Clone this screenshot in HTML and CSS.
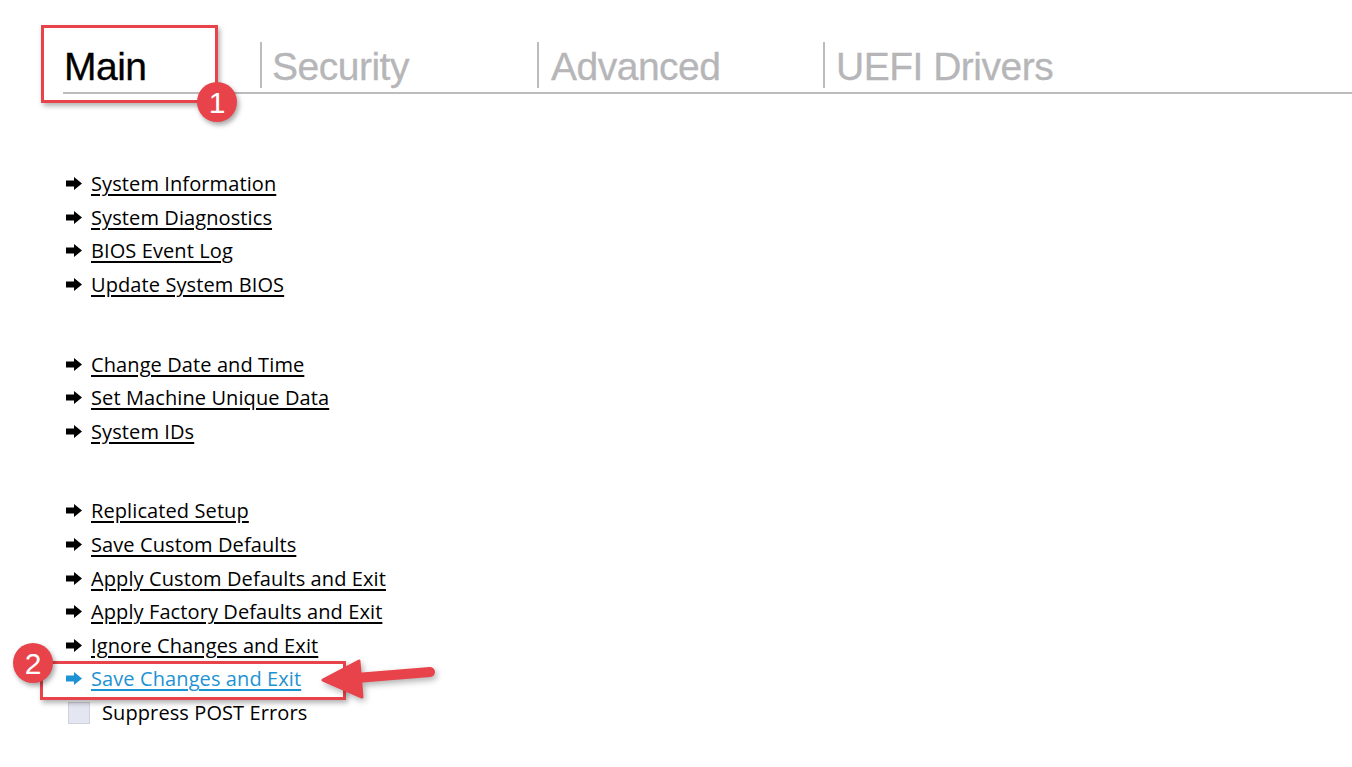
FILE: index.html
```html
<!DOCTYPE html>
<html>
<head>
<meta charset="utf-8">
<link rel="stylesheet" href="styles.css">
</head>
<body>
<div class="page">
  <nav class="tabs">
    <div class="tab tab-main active">Main</div>
    <div class="tab tab-security">Security</div>
    <div class="tab tab-advanced">Advanced</div>
    <div class="tab tab-uefi">UEFI Drivers</div>
  </nav>

  <div class="menu">
    <ul class="group">
      <li class="item"><svg class="arr" viewBox="0 0 16 13"><path d="M0 3.5h8V0l8 6.5-8 6.5V9.5H0z"/></svg><a>System Information</a></li>
      <li class="item"><svg class="arr" viewBox="0 0 16 13"><path d="M0 3.5h8V0l8 6.5-8 6.5V9.5H0z"/></svg><a>System Diagnostics</a></li>
      <li class="item"><svg class="arr" viewBox="0 0 16 13"><path d="M0 3.5h8V0l8 6.5-8 6.5V9.5H0z"/></svg><a>BIOS Event Log</a></li>
      <li class="item"><svg class="arr" viewBox="0 0 16 13"><path d="M0 3.5h8V0l8 6.5-8 6.5V9.5H0z"/></svg><a>Update System BIOS</a></li>
    </ul>
    <ul class="group">
      <li class="item"><svg class="arr" viewBox="0 0 16 13"><path d="M0 3.5h8V0l8 6.5-8 6.5V9.5H0z"/></svg><a>Change Date and Time</a></li>
      <li class="item"><svg class="arr" viewBox="0 0 16 13"><path d="M0 3.5h8V0l8 6.5-8 6.5V9.5H0z"/></svg><a>Set Machine Unique Data</a></li>
      <li class="item"><svg class="arr" viewBox="0 0 16 13"><path d="M0 3.5h8V0l8 6.5-8 6.5V9.5H0z"/></svg><a>System IDs</a></li>
    </ul>
    <ul class="group">
      <li class="item"><svg class="arr" viewBox="0 0 16 13"><path d="M0 3.5h8V0l8 6.5-8 6.5V9.5H0z"/></svg><a>Replicated Setup</a></li>
      <li class="item"><svg class="arr" viewBox="0 0 16 13"><path d="M0 3.5h8V0l8 6.5-8 6.5V9.5H0z"/></svg><a>Save Custom Defaults</a></li>
      <li class="item"><svg class="arr" viewBox="0 0 16 13"><path d="M0 3.5h8V0l8 6.5-8 6.5V9.5H0z"/></svg><a>Apply Custom Defaults and Exit</a></li>
      <li class="item"><svg class="arr" viewBox="0 0 16 13"><path d="M0 3.5h8V0l8 6.5-8 6.5V9.5H0z"/></svg><a>Apply Factory Defaults and Exit</a></li>
      <li class="item"><svg class="arr" viewBox="0 0 16 13"><path d="M0 3.5h8V0l8 6.5-8 6.5V9.5H0z"/></svg><a>Ignore Changes and Exit</a></li>
      <li class="item selected"><svg class="arr" viewBox="0 0 16 13"><path d="M0 3.5h8V0l8 6.5-8 6.5V9.5H0z"/></svg><a>Save Changes and Exit</a></li>
      <li class="item check"><span class="box"></span><span class="label">Suppress POST Errors</span></li>
    </ul>
  </div>

  <div class="callout callout-1"></div>
  <div class="badge badge-1">1</div>
  <div class="callout callout-2"></div>
  <div class="badge badge-2">2</div>
  <svg class="pointer" viewBox="0 0 120 50" width="120" height="50">
    <path d="M36 23 L110 17" stroke="#e8434a" stroke-width="10" stroke-linecap="round" fill="none"/>
    <path d="M3 25 L39 6 L42 42 Z" fill="#e8434a" stroke="#e8434a" stroke-width="3" stroke-linejoin="round"/>
  </svg>
</div>
</body>
</html>
```

FILE: styles.css
```css
html, body {
  margin: 0;
  padding: 0;
  background: #ffffff;
}

.page {
  position: relative;
  width: 1352px;
  height: 767px;
  overflow: hidden;
}

.tabs {
  display: flex;
  align-items: flex-end;
  margin-left: 63px;
  margin-top: 41px;
  border-bottom: 2px solid #bcbcbc;
  height: 51px;
}

.tab {
  font-family: "Liberation Sans", Arial, sans-serif;
  font-size: 39px;
  letter-spacing: -0.5px;
  line-height: 50px;
  color: #b6b6b8;
  height: 46px;
  padding-left: 10px;
  border-left: 2px solid #bcbcbc;
  box-sizing: border-box;
  margin-bottom: 4px;
  white-space: nowrap;
  -webkit-text-stroke: 0.3px currentColor;
}

.tab-main {
  border-left: none;
  padding-left: 1px;
  color: #000;
  width: 197px;
}

.tab-security { width: 277px; }
.tab-advanced { width: 286px; padding-left: 12px; }
.tab-uefi { padding-left: 11px; }

.menu {
  margin-top: 73px;
  margin-left: 66px;
  font-family: "Open Sans", "Liberation Sans", sans-serif;
  font-size: 20px;
  font-weight: 500;
}

.group {
  list-style: none;
  margin: 0 0 46px 0;
  padding: 0;
}

.item {
  display: flex;
  align-items: center;
  height: 33.6px;
}

.arr {
  width: 16px;
  height: 13px;
  margin-right: 9px;
  fill: #000;
  flex: none;
}

.item a {
  color: #000;
  text-decoration: underline;
  text-decoration-thickness: 2px;
  text-underline-offset: 3px;
  letter-spacing: 0.1px;
}

.item.selected .arr { fill: #1e93d3; }
.item.selected a { color: #1e93d3; }

.item.check .box {
  width: 20px;
  height: 20px;
  margin-left: 2px;
  background: #e4e6f1;
  border: 1px solid #cfd1dc;
  flex: none;
}

.item.check .label {
  margin-left: 12px;
  color: #000;
  letter-spacing: 0.1px;
}

.callout {
  position: absolute;
  border: 3px solid #e8434a;
  box-shadow: 2px 3px 5px rgba(0,0,0,0.3);
  box-sizing: border-box;
}

.callout-1 {
  left: 41px;
  top: 25px;
  width: 177px;
  height: 78px;
}

.callout-2 {
  left: 40px;
  top: 661px;
  width: 306px;
  height: 39px;
}

.badge {
  position: absolute;
  width: 40px;
  height: 40px;
  border-radius: 50%;
  background: #e8434a;
  color: #fff;
  font-family: "Liberation Sans", Arial, sans-serif;
  font-size: 30px;
  line-height: 41px;
  text-align: center;
  box-shadow: 2px 3px 5px rgba(0,0,0,0.35);
}

.badge-1 { left: 197px; top: 82px; }
.badge-2 { left: 13px; top: 643px; }

.pointer {
  position: absolute;
  left: 320px;
  top: 655px;
  filter: drop-shadow(2px 3px 3px rgba(0,0,0,0.3));
}
```
